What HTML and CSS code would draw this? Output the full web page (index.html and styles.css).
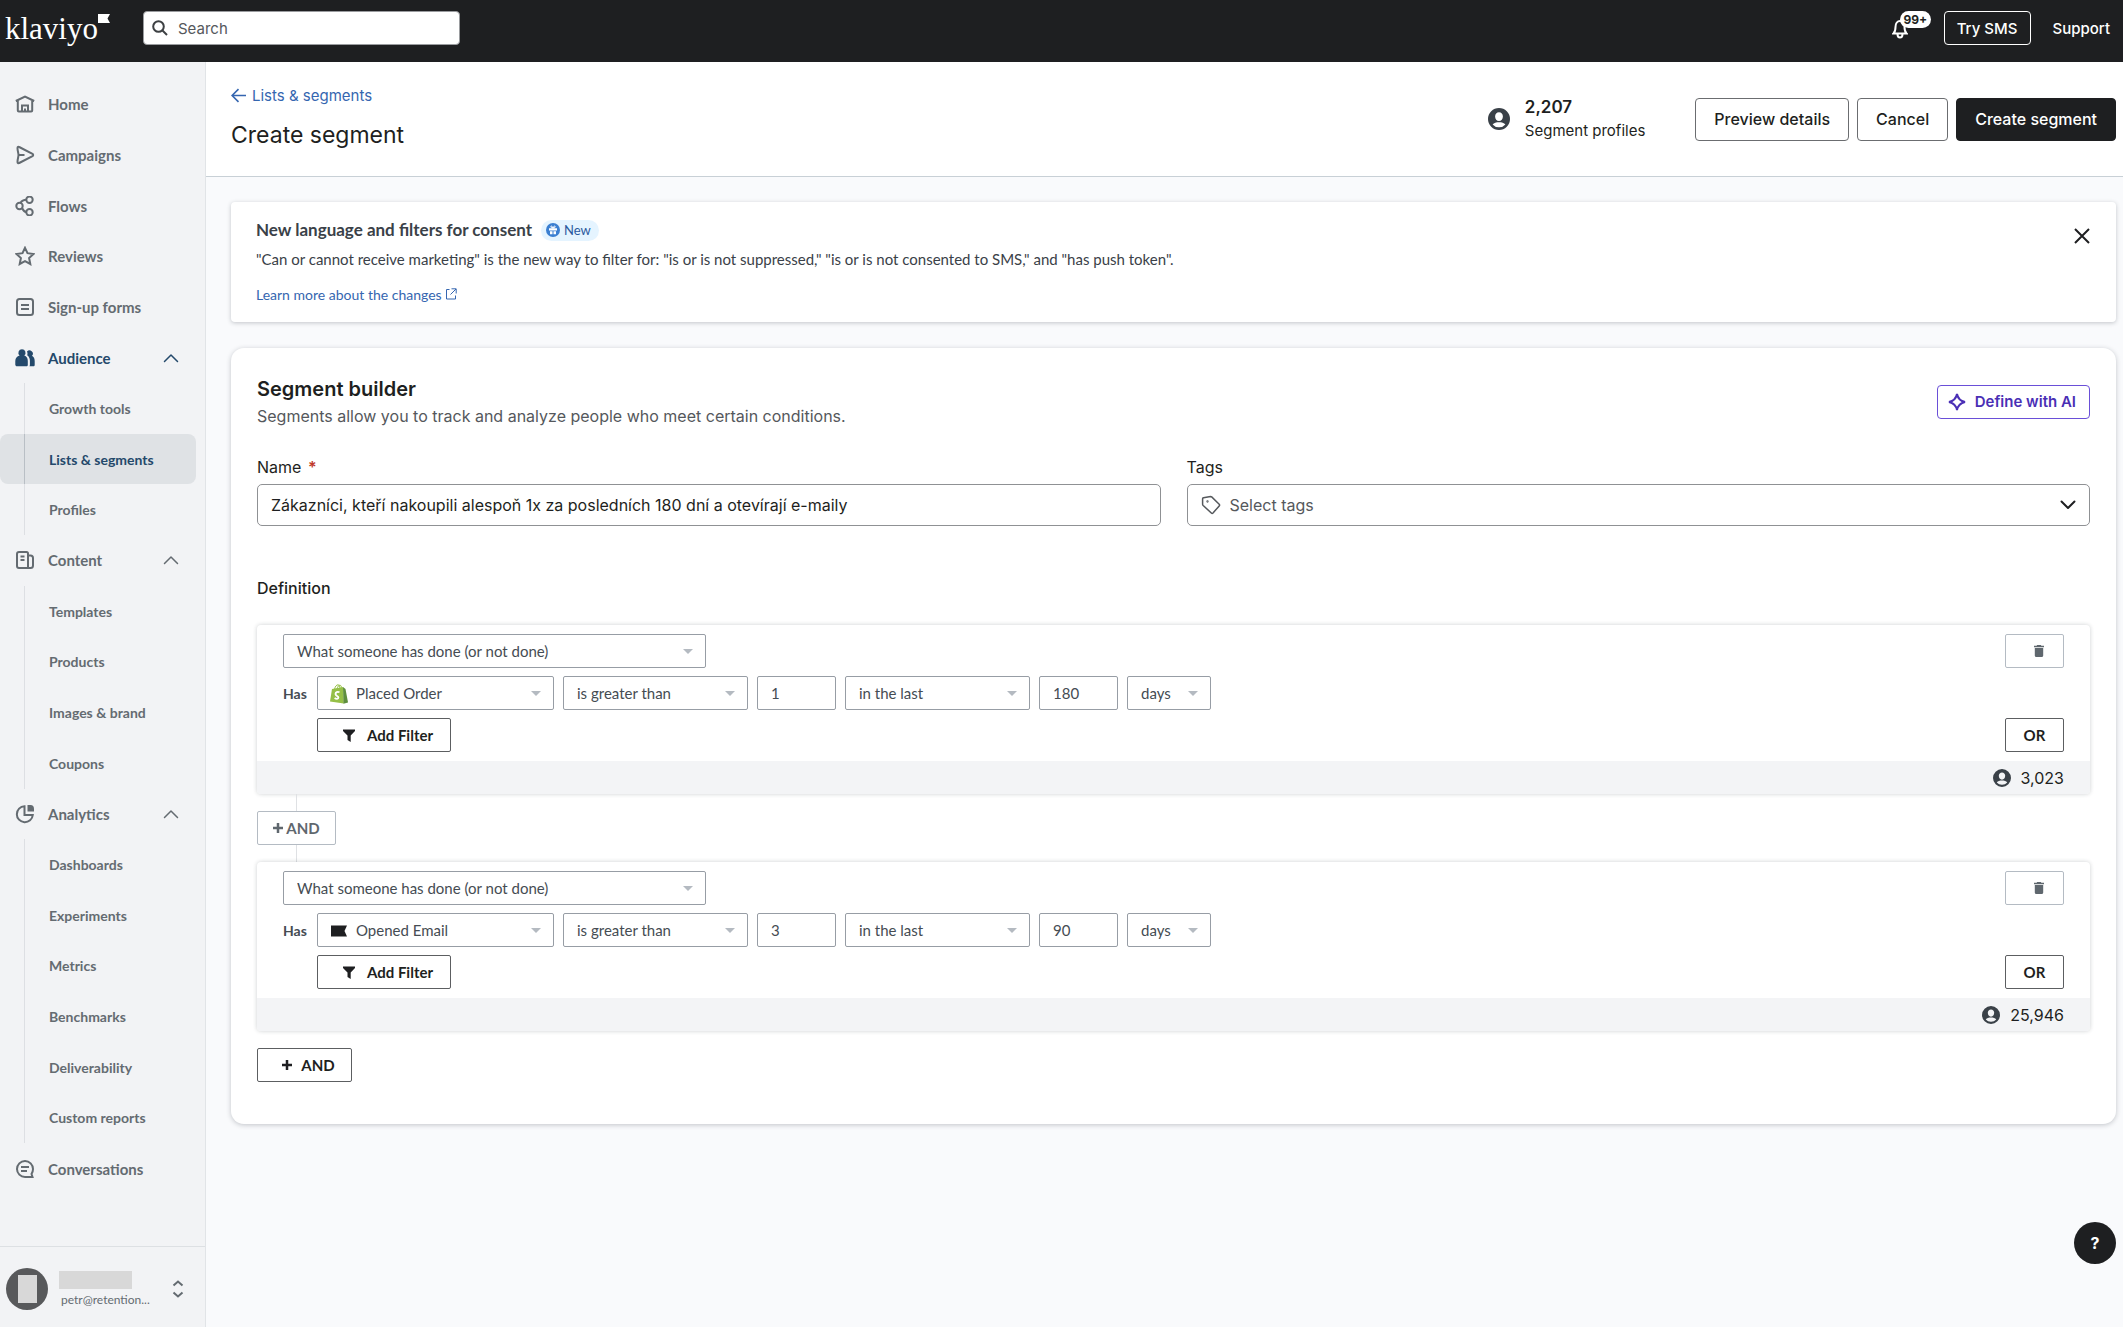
FILE: index.html
```html
<!DOCTYPE html>
<html lang="en">

<head>
    <meta charset="UTF-8" />
    <meta name="viewport" content="width=device-width, initial-scale=1" />
    <title>Create segment | Klaviyo</title>
    <link rel="stylesheet" href="styles.css">
</head>

<body>
    <svg class="sprite" aria-hidden="true">
        <symbol id="person" viewBox="0 0 22 22">
            <path fill="currentColor" fill-rule="evenodd" d="M11 0a11 11 0 1 0 0 22 11 11 0 0 0 0-22zm0 4.2c2.300 0 3.900 1.700 3.900 4.200S13.300 13 11 13 7.100 10.900 7.100 8.400 8.700 4.200 11 4.200zM4.600 16.400c1.400-1.600 3.600-2.200 6.400-2.200s5 .6 6.400 2.200A8.400 8.400 0 0 1 11 19.300a8.400 8.400 0 0 1-6.400-2.900z" />
        </symbol>
        <symbol id="chevron" viewBox="0 0 16 10">
            <path d="M1.500 8.500 8 2l6.500 6.500" fill="none" stroke="currentColor" stroke-linecap="round" stroke-linejoin="round" />
        </symbol>
        <symbol id="filter" viewBox="0 0 12 13">
            <path d="M0 .5h12v1.500L7.700 6.500V13L4.500 11V6.500L0 2z" fill="currentColor" />
        </symbol>
        <symbol id="plus" viewBox="0 0 10 10">
            <path d="M5 0v10M0 5h10" stroke="currentColor" stroke-width="2.500" />
        </symbol>
        <symbol id="trash" viewBox="0 0 10 12">
            <path d="M3.200 0h3.600l.6.8H10v1.400H0V.8h2.600zM.8 3h8.400v7.500c0 .9-.6 1.500-1.500 1.500H2.300C1.400 12 .8 11.400.8 10.500z" fill="currentColor" />
        </symbol>
    </svg>

    <header class="topbar">
        <a class="logo" href="#" aria-label="klaviyo">
            <span>klaviyo</span>
            <svg class="logo-flag" viewBox="0 0 12 9"><path d="M0 0h12L9.500 4.500 12 9H0z" fill="#fff" /></svg>
        </a>
        <div class="search">
            <svg class="search-icon" viewBox="0 0 16 16"><circle cx="6.500" cy="6.500" r="5.300" /><path d="m10.500 10.500 4.500 4.500" /></svg>
            <input type="text" placeholder="Search" aria-label="Search">
        </div>
        <div class="topbar-actions">
            <button class="bell" aria-label="Notifications">
                <svg viewBox="0 0 16 20"><path d="M1.500 14.500h13c-1.500-1.500-2-3-2-6.500C12.500 4.500 10.500 2 8 2S3.500 4.500 3.500 8c0 3.500-.5 5-2 6.500zM5.500 15c0 2 1 3.500 2.500 3.500s2.500-1.500 2.500-3.500" /></svg>
                <span class="bell-count">99+</span>
            </button>
            <button class="sms">Try SMS</button>
            <a class="support" href="#">Support</a>
        </div>
    </header>

    <div class="app">
        <aside class="sidebar">
            <nav>
                <ul class="nav">
                    <li><a href="#"><svg viewBox="0 0 20 20"><path d="M.8 7 10 2.500 19.200 7M2.800 6.500v10c0 .6.400 1 1 1h12.400c.6 0 1-.4 1-1v-10M7 17.500v-6h6v6M10 14.500v3" /></svg>Home</a></li>
                    <li><a href="#"><svg viewBox="0 0 20 20"><path d="M2.500 3c0-1 .8-1.500 1.700-1L17.500 8.800c.9.500.9 1.900 0 2.400L4.200 18c-.9.500-1.700 0-1.700-1 0-3 1-5 1-7s-1-4-1-7zM3.500 10h6" /></svg>Campaigns</a></li>
                    <li><a href="#"><svg viewBox="0 0 20 20"><circle cx="14.500" cy="3.800" r="3.200" /><circle cx="4.500" cy="10" r="3.200" /><circle cx="14.500" cy="16.200" r="3.200" /><path d="M5.500 7C6.500 5 9 3.800 11.500 3.800M7 12c1 2.200 2.500 3.700 4.500 4.200" /></svg>Flows</a></li>
                    <li><a href="#"><svg viewBox="0 0 20 20"><path d="m10 1.800 2.500 5.400 6 .8-4.400 4 1.200 6L10 15.100 4.700 18l1.200-6L1.500 8l6-.8z" /></svg>Reviews</a></li>
                    <li><a href="#"><svg viewBox="0 0 20 20"><rect x="2" y="2" width="16" height="16" rx="2.500" /><path d="M6 8h8M6 12h8" /></svg>Sign-up forms</a></li>
                    <li><a class="open" href="#"><svg class="solid" viewBox="0 0 20 20"><path d="M7 1.200a3.600 3.600 0 0 1 2.300 6.300c2.300.8 3.500 2.800 3.500 5.500v4c0 .8-.6 1.300-1.400 1.300H2c-1 0-1.700-.6-1.700-1.500V13c0-2.700 1.700-4.700 4.300-5.500A3.600 3.600 0 0 1 7 1.200zM12 3.500a3.200 3.200 0 0 1 5 4.300c1.800 1 2.700 2.800 2.700 5.200v4c0 .8-.6 1.300-1.300 1.300h-3.900c.3-.4.400-.9.400-1.500v-4c0-2.300-.9-4.200-2.700-5.500.5-1.200.4-2.600-.2-3.800z" /></svg>Audience<svg class="arrow"><use href="#chevron" /></svg></a></li>
                    <li class="sub"><a href="#">Growth tools</a></li>
                    <li class="sub current"><a href="#">Lists &amp; segments</a></li>
                    <li class="sub"><a href="#">Profiles</a></li>
                    <li><a href="#"><svg viewBox="0 0 20 20"><path d="M4 2h7.500c.8 0 1.500.6 1.500 1.500V18H4c-1.100 0-2-.9-2-2V4c0-1.100.9-2 2-2zM13 5.500h2.500c1.400 0 2.500 1 2.500 2.500v7.500c0 1.400-1.100 2.500-2.500 2.500H13M5.500 6.500h4M5.500 10h4" /></svg>Content<svg class="arrow"><use href="#chevron" /></svg></a></li>
                    <li class="sub"><a href="#">Templates</a></li>
                    <li class="sub"><a href="#">Products</a></li>
                    <li class="sub"><a href="#">Images &amp; brand</a></li>
                    <li class="sub"><a href="#">Coupons</a></li>
                    <li><a href="#"><svg viewBox="0 0 20 20"><path d="M9.500 2.200A8 8 0 1 0 17.800 11H9.500z" /><path d="M13.500 2h2C17 2 18 3.500 18 5v1.500h-4.500z" fill="currentColor" /></svg>Analytics<svg class="arrow"><use href="#chevron" /></svg></a></li>
                    <li class="sub"><a href="#">Dashboards</a></li>
                    <li class="sub"><a href="#">Experiments</a></li>
                    <li class="sub"><a href="#">Metrics</a></li>
                    <li class="sub"><a href="#">Benchmarks</a></li>
                    <li class="sub"><a href="#">Deliverability</a></li>
                    <li class="sub"><a href="#">Custom reports</a></li>
                    <li><a href="#"><svg viewBox="0 0 20 20"><path d="M17.500 18H10a8 8 0 1 1 8-8c0 2-.5 3.500-1.500 5zM6 8h8M6 12h6" /></svg>Conversations</a></li>
                </ul>
            </nav>
            <div class="account">
                <span class="avatar"><span></span></span>
                <div class="account-info">
                    <span class="account-name"></span>
                    <span class="account-email">petr@retention...</span>
                </div>
                <button class="account-toggle" aria-label="Switch account">
                    <svg viewBox="0 0 12 18"><path d="m1.500 5.500 4.500-4 4.500 4M1.500 12.500l4.500 4 4.500-4" /></svg>
                </button>
            </div>
        </aside>

        <main class="main">
            <div class="page-header">
                <div>
                    <a class="back" href="#"><svg viewBox="0 0 14 14"><path d="M14 7H1M7 1 1 7l6 6" /></svg>Lists &amp; segments</a>
                    <h1>Create segment</h1>
                </div>
                <div class="profiles">
                    <svg><use href="#person" /></svg>
                    <div>
                        <strong>2,207</strong>
                        <span>Segment profiles</span>
                    </div>
                </div>
                <div class="page-actions">
                    <button class="btn">Preview details</button>
                    <button class="btn">Cancel</button>
                    <button class="btn btn-primary">Create segment</button>
                </div>
            </div>

            <div class="content">
                <section class="banner">
                    <div>
                        <h2>New language and filters for consent
                            <span class="badge"><svg viewBox="0 0 14 14"><circle cx="7" cy="7" r="7" fill="#3b7fd1" /><path d="M3 5.200h8v2.300H3zM4 8.200h2.500v3H4zM7.500 8.200H10v3H7.500z" fill="#fff" /><path d="M7 5C5.500 5 4.500 4.300 4.800 3.500S6.500 3 7 5c.5-2 1.900-2.300 2.200-1.500S8.500 5 7 5z" fill="none" stroke="#fff" /></svg>New</span>
                        </h2>
                        <p>"Can or cannot receive marketing" is the new way to filter for: "is or is not suppressed," "is or is not consented to SMS," and "has push token".</p>
                        <a href="#">Learn more about the changes <svg viewBox="0 0 12 12"><path d="M4.500 1.500h-3v9.500h9V7.500M6.500.8h4.700v4.700M11 1 5.500 6.500" /></svg></a>
                    </div>
                    <button class="close" aria-label="Close"><svg viewBox="0 0 16 16"><path d="m1 1 14 14M15 1 1 15" /></svg></button>
                </section>

                <section class="builder">
                    <div class="builder-head">
                        <div>
                            <h2>Segment builder</h2>
                            <p>Segments allow you to track and analyze people who meet certain conditions.</p>
                        </div>
                        <button class="ai"><svg viewBox="0 0 18 18"><path d="M9 1c1 4.800 3.200 7 8 8-4.800 1-7 3.200-8 8-1-4.800-3.200-7-8-8 4.800-1 7-3.200 8-8z" /></svg>Define with AI</button>
                    </div>

                    <div class="fields">
                        <div class="field">
                            <label for="name">Name <span class="required">*</span></label>
                            <input id="name" type="text" value="Zákazníci, kteří nakoupili alespoň 1x za posledních 180 dní a otevírají e-maily">
                        </div>
                        <div class="field">
                            <label for="tags">Tags</label>
                            <div class="tags">
                                <svg class="tag-icon" viewBox="0 0 20 20"><path d="M2.500 2.800 9.500 1.500c.5 0 .8.100 1.200.4l7.500 7.300c.5.500.5 1.200 0 1.700L12 18c-.5.500-1.200.5-1.700 0L2.200 10.500c-.4-.4-.6-.8-.6-1.300V3.800c0-.6.400-.9.900-1z" /><circle cx="6.500" cy="6.500" r=".4" /></svg>
                                <select id="tags"><option>Select tags</option></select>
                                <svg class="tags-arrow"><use href="#chevron" /></svg>
                            </div>
                        </div>
                    </div>

                    <h3>Definition</h3>

                    <div class="condition">
                        <div class="condition-body">
                            <div class="row">
                                <span class="select type"><select aria-label="Condition type"><option>What someone has done (or not done)</option></select></span>
                                <button class="small-btn muted end" aria-label="Delete"><svg class="trash"><use href="#trash" /></svg></button>
                            </div>
                            <div class="row">
                                <span class="has">Has</span>
                                <span class="select metric">
                                    <svg class="metric-icon" viewBox="0 0 18 20"><path d="M2 5 13 3l.8 16.500L0 17.500z" fill="#95bf47" /><path d="m13 3 2.500 2L18 18.500l-4.500 1.200z" fill="#5e8e3e" /><path d="M4.500 5.500C5 2.500 6.500.8 8 .8c1.300 0 2 1.500 2 4M7 5C7.500 2.500 9 1 10 1.200c1 .2 1.500 1.300 1.500 2.500" fill="none" stroke="#95bf47" /><path d="M9.500 8.300c-2-1-4 0-4 1.800 0 2 2.900 1.800 2.900 3.500 0 1.600-2.200 1.600-3.800.4" fill="none" stroke="#fff" stroke-width="1.800" /></svg>
                                    <select aria-label="Metric"><option>Placed Order</option></select>
                                </span>
                                <span class="select operator"><select aria-label="Operator"><option>is greater than</option></select></span>
                                <input class="number" type="text" value="1" aria-label="Count">
                                <span class="select operator"><select aria-label="Timeframe"><option>in the last</option></select></span>
                                <input class="number" type="text" value="180" aria-label="Amount">
                                <span class="select unit"><select aria-label="Unit"><option>days</option></select></span>
                            </div>
                            <div class="row">
                                <button class="small-btn filter"><svg><use href="#filter" /></svg>Add Filter</button>
                                <button class="small-btn end">OR</button>
                            </div>
                        </div>
                        <div class="condition-count"><svg><use href="#person" /></svg>3,023</div>
                    </div>

                    <div class="joiner">
                        <button class="small-btn muted join"><svg><use href="#plus" /></svg>AND</button>
                    </div>

                    <div class="condition">
                        <div class="condition-body">
                            <div class="row">
                                <span class="select type"><select aria-label="Condition type"><option>What someone has done (or not done)</option></select></span>
                                <button class="small-btn muted end" aria-label="Delete"><svg class="trash"><use href="#trash" /></svg></button>
                            </div>
                            <div class="row">
                                <span class="has">Has</span>
                                <span class="select metric">
                                    <svg class="metric-icon" viewBox="0 0 18 20"><path d="M1 4.500h16L14.500 10l2.500 5.500H1z" fill="#1e1f21" /></svg>
                                    <select aria-label="Metric"><option>Opened Email</option></select>
                                </span>
                                <span class="select operator"><select aria-label="Operator"><option>is greater than</option></select></span>
                                <input class="number" type="text" value="3" aria-label="Count">
                                <span class="select operator"><select aria-label="Timeframe"><option>in the last</option></select></span>
                                <input class="number" type="text" value="90" aria-label="Amount">
                                <span class="select unit"><select aria-label="Unit"><option>days</option></select></span>
                            </div>
                            <div class="row">
                                <button class="small-btn filter"><svg><use href="#filter" /></svg>Add Filter</button>
                                <button class="small-btn end">OR</button>
                            </div>
                        </div>
                        <div class="condition-count"><svg><use href="#person" /></svg>25,946</div>
                    </div>

                    <button class="small-btn add-and"><svg><use href="#plus" /></svg>AND</button>
                </section>
            </div>
        </main>
    </div>

    <button class="help" aria-label="Help">?</button>
</body>

</html>
```
FILE: styles.css
```css
* {
    box-sizing: border-box;
}

body {
    display: flex;
    flex-direction: column;
    min-height: 100vh;
    margin: 0;
    background-color: #f9fafc;
    color: #1e1f21;
    font-family: Inter, sans-serif;
    font-size: 16px;
}

h1, h2, h3, p, ul {
    margin: 0;
    padding: 0;
}

a {
    color: #3566b0;
    text-decoration: none;
}

button, input, select {
    font-family: inherit;
    color: inherit;
}

button {
    cursor: pointer;
    padding: 0;
}

svg {
    flex: none;
}

.sprite {
    display: none;
}

/* top bar */
.topbar {
    display: flex;
    align-items: flex-start;
    height: 62px;
    padding: 11px 13px 0 5px;
    background-color: #1e1f21;
    color: #fff;
}

.logo {
    display: flex;
    width: 138px;
    color: #fff;
    font-family: "Liberation Serif", serif;
    font-size: 31px;
    line-height: 36px;
}

.logo-flag {
    width: 12px;
    height: 9px;
    margin-top: 3px;
}

.search {
    position: relative;
    width: 317px;
}

.search input {
    width: 100%;
    height: 34px;
    padding: 0 12px 0 34px;
    border: 1px solid #9a9c9f;
    border-radius: 4px;
    background-color: #fff;
    color: #1e1f21;
    font-size: 15px;
}

.search input::placeholder {
    color: #55585c;
}

.search-icon {
    position: absolute;
    left: 9px;
    top: 9px;
    width: 16px;
    height: 16px;
    fill: none;
    stroke: #3d4043;
    stroke-width: 2;
}

.topbar-actions {
    display: flex;
    align-items: center;
    margin-left: auto;
    font-size: 15px;
    font-weight: 500;
}

.bell {
    position: relative;
    width: 53px;
    height: 34px;
    border: none;
    background: none;
    text-align: left;
}

.bell svg {
    width: 16px;
    height: 20px;
    margin-top: 4px;
    margin-left: 1px;
    fill: none;
    stroke: #fff;
    stroke-width: 2;
}

.bell-count {
    position: absolute;
    left: 9px;
    top: 0;
    padding: 0 4px;
    border-radius: 9px;
    background-color: #fff;
    color: #1e1f21;
    font-size: 12px;
    font-weight: 700;
    line-height: 17px;
}

.sms {
    width: 87px;
    height: 34px;
    border: 1px solid #fff;
    border-radius: 4px;
    background: none;
    color: #fff;
    font-size: 15px;
    font-weight: 500;
}

.support {
    margin-left: 22px;
    color: #fff;
}

/* sidebar */
.app {
    display: flex;
    flex: 1;
}

.sidebar {
    display: flex;
    flex-direction: column;
    flex: none;
    width: 206px;
    border-right: 1px solid #e1e4e7;
    background-color: #f2f3f5;
    color: #646b71;
    font-family: Lato, sans-serif;
    font-weight: 700;
}

.sidebar nav {
    display: flex;
    flex: 1;
    padding: 17px 9px 52px 0;
}

.nav {
    display: grid;
    grid-auto-rows: 1fr;
    flex: 1;
    list-style: none;
}

.nav a {
    display: flex;
    align-items: center;
    height: 100%;
    padding: 0 17px 0 15px;
    color: #646b71;
    font-size: 15px;
}

.nav svg {
    width: 20px;
    height: 20px;
    margin-right: 13px;
    fill: none;
    stroke: currentColor;
    stroke-width: 2;
}

.nav .arrow {
    width: 16px;
    height: 10px;
    margin: 0 0 0 auto;
    stroke-width: 1.5;
}

.nav .solid {
    fill: currentColor;
    stroke: none;
}

.nav .open,
.nav .current a {
    color: #24496b;
}

.nav .sub a {
    margin-left: 24px;
    padding-left: 24px;
    border-left: 1px solid #dddfe3;
    font-size: 14px;
}

.nav .current {
    border-radius: 8px;
    background-color: #dfe2e5;
}

.nav .current a {
    border-color: #b9bfc5;
}

.account {
    display: flex;
    align-items: center;
    height: 81px;
    padding: 4px 21px 0 6px;
    border-top: 1px solid #dde0e3;
}

.avatar {
    display: flex;
    align-items: center;
    justify-content: center;
    width: 42px;
    height: 42px;
    border-radius: 50%;
    background-color: #58595b;
}

.avatar span {
    width: 19px;
    height: 28px;
    background-color: #d8d8d8;
}

.account-info {
    display: flex;
    flex-direction: column;
    gap: 3px;
    margin-left: 11px;
}

.account-name {
    width: 73px;
    height: 18px;
    background-color: #d8d8d8;
}

.account-email {
    padding-left: 2px;
    font-size: 12px;
    font-weight: 400;
}

.account-toggle {
    margin-left: auto;
    border: none;
    background: none;
}

.account-toggle svg {
    display: block;
    width: 12px;
    height: 18px;
    fill: none;
    stroke: #646b71;
    stroke-width: 2;
}

/* page header */
.main {
    flex: 1;
    min-width: 0;
}

.page-header {
    display: flex;
    align-items: center;
    height: 115px;
    padding: 0 7px 0 25px;
    border-bottom: 1px solid #c8d0d6;
    background-color: #fff;
}

.back {
    display: flex;
    align-items: center;
    gap: 6px;
    font-size: 15px;
    line-height: 20px;
}

.back svg {
    width: 15px;
    height: 15px;
    fill: none;
    stroke: currentColor;
    stroke-width: 1.5;
}

.page-header h1 {
    margin: 13px 0 2px;
    font-size: 23px;
    font-weight: 400;
    line-height: 32px;
}

.profiles {
    display: flex;
    align-items: center;
    gap: 15px;
    margin-left: auto;
    margin-right: 50px;
    font-size: 15px;
    line-height: 23px;
}

.profiles svg {
    width: 22px;
    height: 22px;
    color: #3a4148;
}

.profiles strong {
    display: block;
    font-size: 17px;
    font-weight: 600;
}

.page-actions {
    display: flex;
    gap: 8px;
}

.btn {
    height: 43px;
    padding: 0 18px;
    border: 1px solid #6b6d70;
    border-radius: 4px;
    background-color: #fff;
    font-size: 16px;
    font-weight: 500;
}

.btn-primary {
    border-color: #1e1f21;
    background-color: #1e1f21;
    color: #fff;
}

.content {
    display: flex;
    flex-direction: column;
    gap: 26px;
    padding: 25px 7px 40px 25px;
}

/* banner */
.banner {
    display: flex;
    justify-content: space-between;
    align-items: flex-start;
    height: 120px;
    padding: 17px 26px 0 25px;
    border-radius: 4px;
    background-color: #fff;
    box-shadow: 0 1px 4px rgba(30, 40, 50, 0.25);
    color: #3a4148;
    font-family: Lato, sans-serif;
    font-size: 14px;
}

.banner h2 {
    display: flex;
    align-items: center;
    gap: 9px;
    font-size: 17px;
    font-weight: 700;
    line-height: 22px;
}

.badge {
    display: flex;
    align-items: center;
    gap: 4px;
    padding: 0 8px 0 5px;
    border-radius: 11px;
    background-color: #e5f4ff;
    color: #2b5a9e;
    font-size: 13px;
    font-weight: 400;
    line-height: 21px;
}

.badge svg {
    width: 14px;
    height: 14px;
}

.banner p {
    margin: 8px 0 17px;
    font-size: 15px;
    line-height: 20px;
}

.banner a svg {
    width: 12px;
    height: 12px;
    fill: none;
    stroke: currentColor;
}

.close {
    margin-top: 9px;
    border: none;
    background: none;
}

.close svg {
    display: block;
    width: 16px;
    height: 16px;
    fill: none;
    stroke: #1e1f21;
    stroke-width: 2;
}

/* segment builder */
.builder {
    padding: 26px 26px 42px;
    border-radius: 13px;
    background-color: #fff;
    box-shadow: 0 1px 5px rgba(30, 40, 50, 0.25);
}

.builder-head {
    display: flex;
    align-items: center;
    justify-content: space-between;
    color: #55585c;
}

.builder-head h2 {
    color: #1e1f21;
    font-size: 20px;
    font-weight: 600;
    line-height: 30px;
}

.builder-head p {
    line-height: 25px;
}

.ai {
    display: flex;
    align-items: center;
    gap: 9px;
    height: 34px;
    padding: 0 13px 0 10px;
    border: 1px solid #6a4fd8;
    border-radius: 4px;
    background-color: #fff;
    color: #4a2fb5;
    font-size: 15px;
    font-weight: 600;
}

.ai svg {
    width: 18px;
    height: 18px;
    fill: none;
    stroke: currentColor;
    stroke-width: 2;
}

.fields {
    display: grid;
    grid-template-columns: 1fr 1fr;
    gap: 26px;
    margin-top: 26px;
}

.field label {
    display: block;
    line-height: 24px;
    margin-bottom: 5px;
}

.required {
    margin-left: 2px;
    color: #c0392b;
    font-weight: 600;
}

.field input,
.field select {
    width: 100%;
    height: 42px;
    padding: 0 13px;
    border: 1px solid #8f9194;
    border-radius: 5px;
    background-color: #fff;
    font-size: 16px;
}

.tags {
    position: relative;
}

.tags select {
    display: block;
    appearance: none;
    padding-left: 42px;
    color: #55585c;
}

.tag-icon {
    position: absolute;
    left: 14px;
    top: 11px;
    width: 20px;
    height: 20px;
    fill: none;
    stroke: #55585c;
    stroke-width: 1.5;
}

.tags-arrow {
    position: absolute;
    right: 14px;
    top: 16px;
    width: 16px;
    height: 10px;
    stroke-width: 2;
    transform: rotate(180deg);
}

.builder h3 {
    margin: 50px 0 25px;
    font-size: 16px;
    font-weight: 500;
    line-height: 24px;
}

.condition {
    overflow: hidden;
    border-radius: 4px;
    box-shadow: 0 0 4px rgba(30, 40, 50, 0.22);
    color: #454c53;
}

.condition-body {
    display: flex;
    flex-direction: column;
    gap: 8px;
    padding: 9px 26px;
    font-family: Lato, sans-serif;
}

.row {
    display: flex;
    align-items: center;
    gap: 9px;
}

.has {
    width: 25px;
    font-size: 14px;
    font-weight: 700;
}

.select {
    position: relative;
}

.select::after {
    content: "";
    position: absolute;
    right: 13px;
    top: 15px;
    border: 5px solid transparent;
    border-top-color: #b4bac1;
    border-bottom: none;
    pointer-events: none;
}

.select select,
.number {
    display: block;
    width: 100%;
    height: 34px;
    padding: 0 13px;
    border: 1px solid #979da5;
    border-radius: 2px;
    background-color: #fff;
    font-size: 15px;
}

.select select {
    appearance: none;
}

.type {
    width: 423px;
}

.metric {
    width: 237px;
}

.metric select {
    padding-left: 38px;
}

.metric-icon {
    position: absolute;
    left: 13px;
    top: 8px;
    width: 18px;
    height: 20px;
}

.operator {
    width: 185px;
}

.row .number {
    width: 79px;
}

.unit {
    width: 84px;
}

.small-btn {
    display: flex;
    align-items: center;
    justify-content: center;
    width: 59px;
    height: 34px;
    border: 1px solid #5c5e61;
    border-radius: 2px;
    background-color: #fff;
    color: #1e1f21;
    font-family: Lato, sans-serif;
    font-size: 15px;
    font-weight: 700;
}

.muted {
    border-color: #b4bbc3;
    color: #5f676e;
}

.end {
    margin-left: auto;
}

.filter {
    gap: 12px;
    width: 134px;
    margin-left: 34px;
    padding-left: 8px;
}

.filter svg {
    width: 12px;
    height: 13px;
}

.trash {
    width: 10px;
    height: 12px;
    margin-left: 8px;
}

.condition-count {
    display: flex;
    align-items: center;
    justify-content: flex-end;
    gap: 10px;
    height: 33px;
    padding-right: 26px;
    background-color: #f3f4f6;
    color: #1e1f21;
    font-size: 16px;
}

.condition-count svg {
    width: 18px;
    height: 18px;
    color: #3a4148;
}

/* line that links two conditions */
.joiner {
    padding: 17px 0;
    background: linear-gradient(#dfe1e4, #dfe1e4) 39px 0 / 1px 100% no-repeat;
}

.join {
    gap: 3px;
    width: 79px;
}

.join svg,
.add-and svg {
    width: 10px;
    height: 10px;
}

.add-and {
    gap: 9px;
    width: 95px;
    margin-top: 17px;
    padding-left: 8px;
}

.help {
    position: fixed;
    right: 7px;
    bottom: 63px;
    width: 42px;
    height: 42px;
    border: none;
    border-radius: 50%;
    background-color: #1e1f21;
    color: #fff;
    font-size: 16px;
    font-weight: 700;
}
```
